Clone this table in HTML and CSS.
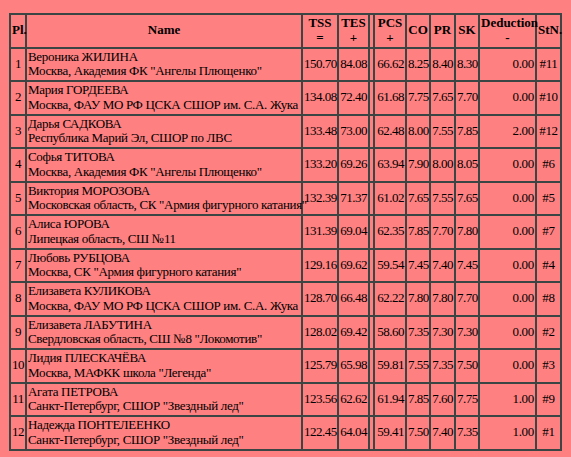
FILE: index.html
```html
<!DOCTYPE html>
<html lang="ru">

<head>
    <meta charset="UTF-8">
    <title>Results</title>
    <link rel="stylesheet" href="styles.css">
</head>

<body>
    <table class="results">
        <thead>
            <tr>
                <th class="c-pl">Pl.</th>
                <th class="c-name">Name</th>
                <th class="c-tss">TSS<br>=</th>
                <th class="c-tes">TES<br>+</th>
                <th class="c-gap"></th>
                <th class="c-pcs">PCS<br>+</th>
                <th class="c-co">CO</th>
                <th class="c-pr">PR</th>
                <th class="c-sk">SK</th>
                <th class="c-ded">Deduction<br>-</th>
                <th class="c-stn">StN.</th>
            </tr>
        </thead>
        <tbody>
            <tr>
                <td class="pl">1</td>
                <td class="name">Вероника ЖИЛИНА<br>Москва, Академия ФК "Ангелы Плющенко"</td>
                <td class="num">150.70</td><td class="num">84.08</td><td></td>
                <td class="num">66.62</td><td class="num">8.25</td><td class="num">8.40</td><td class="num">8.30</td>
                <td class="ded">0.00</td><td class="stn">#11</td>
            </tr>
            <tr>
                <td class="pl">2</td>
                <td class="name">Мария ГОРДЕЕВА<br>Москва, ФАУ МО РФ ЦСКА СШОР им. С.А. Жука</td>
                <td class="num">134.08</td><td class="num">72.40</td><td></td>
                <td class="num">61.68</td><td class="num">7.75</td><td class="num">7.65</td><td class="num">7.70</td>
                <td class="ded">0.00</td><td class="stn">#10</td>
            </tr>
            <tr>
                <td class="pl">3</td>
                <td class="name">Дарья САДКОВА<br>Республика Марий Эл, СШОР по ЛВС</td>
                <td class="num">133.48</td><td class="num">73.00</td><td></td>
                <td class="num">62.48</td><td class="num">8.00</td><td class="num">7.55</td><td class="num">7.85</td>
                <td class="ded">2.00</td><td class="stn">#12</td>
            </tr>
            <tr>
                <td class="pl">4</td>
                <td class="name">Софья ТИТОВА<br>Москва, Академия ФК "Ангелы Плющенко"</td>
                <td class="num">133.20</td><td class="num">69.26</td><td></td>
                <td class="num">63.94</td><td class="num">7.90</td><td class="num">8.00</td><td class="num">8.05</td>
                <td class="ded">0.00</td><td class="stn">#6</td>
            </tr>
            <tr>
                <td class="pl">5</td>
                <td class="name">Виктория МОРОЗОВА<br>Московская область, СК "Армия фигурного катания"</td>
                <td class="num">132.39</td><td class="num">71.37</td><td></td>
                <td class="num">61.02</td><td class="num">7.65</td><td class="num">7.55</td><td class="num">7.65</td>
                <td class="ded">0.00</td><td class="stn">#5</td>
            </tr>
            <tr>
                <td class="pl">6</td>
                <td class="name">Алиса ЮРОВА<br>Липецкая область, СШ №11</td>
                <td class="num">131.39</td><td class="num">69.04</td><td></td>
                <td class="num">62.35</td><td class="num">7.85</td><td class="num">7.70</td><td class="num">7.80</td>
                <td class="ded">0.00</td><td class="stn">#7</td>
            </tr>
            <tr>
                <td class="pl">7</td>
                <td class="name">Любовь РУБЦОВА<br>Москва, СК "Армия фигурного катания"</td>
                <td class="num">129.16</td><td class="num">69.62</td><td></td>
                <td class="num">59.54</td><td class="num">7.45</td><td class="num">7.40</td><td class="num">7.45</td>
                <td class="ded">0.00</td><td class="stn">#4</td>
            </tr>
            <tr>
                <td class="pl">8</td>
                <td class="name">Елизавета КУЛИКОВА<br>Москва, ФАУ МО РФ ЦСКА СШОР им. С.А. Жука</td>
                <td class="num">128.70</td><td class="num">66.48</td><td></td>
                <td class="num">62.22</td><td class="num">7.80</td><td class="num">7.80</td><td class="num">7.70</td>
                <td class="ded">0.00</td><td class="stn">#8</td>
            </tr>
            <tr>
                <td class="pl">9</td>
                <td class="name">Елизавета ЛАБУТИНА<br>Свердловская область, СШ №8 "Локомотив"</td>
                <td class="num">128.02</td><td class="num">69.42</td><td></td>
                <td class="num">58.60</td><td class="num">7.35</td><td class="num">7.30</td><td class="num">7.30</td>
                <td class="ded">0.00</td><td class="stn">#2</td>
            </tr>
            <tr>
                <td class="pl">10</td>
                <td class="name">Лидия ПЛЕСКАЧЁВА<br>Москва, МАФКК школа "Легенда"</td>
                <td class="num">125.79</td><td class="num">65.98</td><td></td>
                <td class="num">59.81</td><td class="num">7.55</td><td class="num">7.35</td><td class="num">7.50</td>
                <td class="ded">0.00</td><td class="stn">#3</td>
            </tr>
            <tr>
                <td class="pl">11</td>
                <td class="name">Агата ПЕТРОВА<br>Санкт-Петербург, СШОР "Звездный лед"</td>
                <td class="num">123.56</td><td class="num">62.62</td><td></td>
                <td class="num">61.94</td><td class="num">7.85</td><td class="num">7.60</td><td class="num">7.75</td>
                <td class="ded">1.00</td><td class="stn">#9</td>
            </tr>
            <tr>
                <td class="pl">12</td>
                <td class="name">Надежда ПОНТЕЛЕЕНКО<br>Санкт-Петербург, СШОР "Звездный лед"</td>
                <td class="num">122.45</td><td class="num">64.04</td><td></td>
                <td class="num">59.41</td><td class="num">7.50</td><td class="num">7.40</td><td class="num">7.35</td>
                <td class="ded">1.00</td><td class="stn">#1</td>
            </tr>
        </tbody>
    </table>
</body>

</html>
```

FILE: styles.css
```css
body {
    margin: 0;
    padding: 13px 0 0 9px;
    background-color: #ff8080;
    color: #000;
    font-family: "Liberation Serif", "Liberation Sans", sans-serif;
    font-size: 13px;
}

.results {
    border-collapse: separate;
    border-spacing: 0;
    border: 1px solid #3b4543;
    table-layout: fixed;
    width: 553px;
    line-height: 14.75px;
}

.results th,
.results td {
    box-sizing: border-box;
    border: 1px solid #3b4543;
    padding: 1px;
    vertical-align: middle;
    white-space: nowrap;
    overflow: visible;
}

.results th {
    font-weight: bold;
    text-align: center;
}

.c-pl { width: 16px; }
.c-name { width: 276px; }
.c-tss { width: 36px; }
.c-tes { width: 31px; }
.c-gap { width: 5px; }
.c-pcs { width: 32px; }
.c-co { width: 24px; }
.c-pr { width: 25px; }
.c-sk { width: 24px; }
.c-ded { width: 57px; }
.c-stn { width: 25px; }

.pl {
    text-align: center;
    letter-spacing: -0.5px;
}

.name {
    text-align: left;
    padding-left: 2px;
    letter-spacing: -0.32px;
}

.num {
    text-align: right;
    letter-spacing: -0.5px;
}

.ded {
    text-align: right;
    padding-right: 2px;
    letter-spacing: -0.3px;
}

.stn {
    text-align: center;
    letter-spacing: -0.3px;
}
```
